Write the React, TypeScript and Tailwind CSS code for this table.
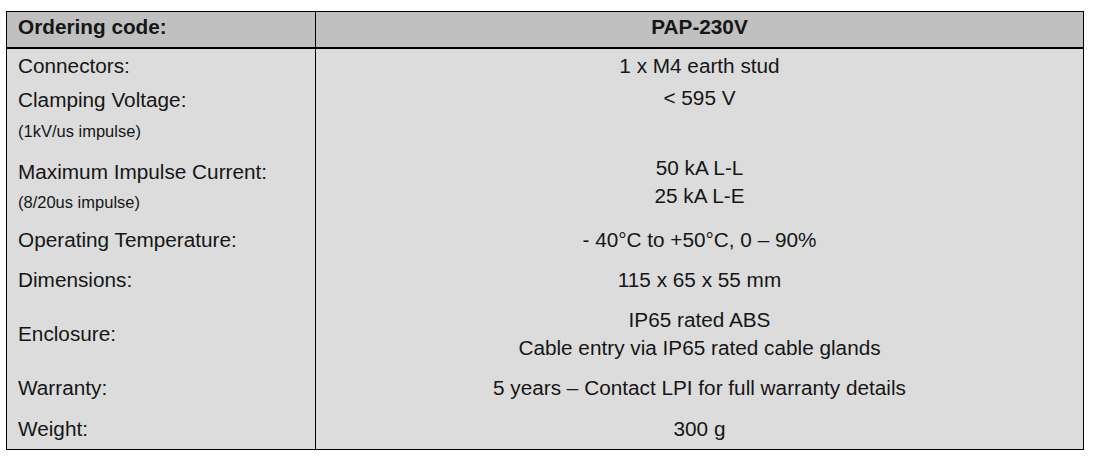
export default function App() {
  return (
    <main className="min-h-screen bg-white pt-[11px] pl-[6px] text-[#161616] font-['Liberation_Sans',Arial,sans-serif]">
      <div className="w-[1078px] border border-black bg-[#dcdcdc]">
        {/* Header */}
        <div className="grid grid-cols-[309px_1fr] h-[37px] bg-[#c0c0c0] border-b-2 border-black">
          <div className="border-r border-black pl-[11px] pt-[1px] text-[20.75px] leading-[28px] font-bold">
            Ordering code:
          </div>
          <div className="text-center pt-[1px] text-[20.75px] leading-[28px] font-bold">PAP-230V</div>
        </div>

        {/* Connectors */}
        <Row h="h-[33px]">
          <Cell left>Connectors:</Cell>
          <Cell>1 x M4 earth stud</Cell>
        </Row>

        {/* Clamping */}
        <Row h="h-[68px]">
          <div className="border-r border-black pl-[11px] pt-[4px]">
            <p className="text-[20.75px] leading-[28px]">Clamping Voltage:</p>
            <p className="mt-[6px] text-[16.5px] leading-[22px]">(1kV/us impulse)</p>
          </div>
          <div className="text-center pt-[2px] text-[20.75px] leading-[28px]">&lt; 595 V</div>
        </Row>

        {/* Impulse current */}
        <Row h="h-[70px]">
          <div className="border-r border-black pl-[11px] pt-[8px]">
            <p className="text-[20.75px] leading-[28px]">Maximum Impulse Current:</p>
            <p className="mt-[5px] text-[16.5px] leading-[22px]">(8/20us impulse)</p>
          </div>
          <div className="text-center pt-[4px] text-[20.75px] leading-[28px]">
            <p>50 kA L-L</p>
            <p>25 kA L-E</p>
          </div>
        </Row>

        <Row h="h-[40px]">
          <Cell left>Operating Temperature:</Cell>
          <Cell>- 40°C to +50°C, 0 – 90%</Cell>
        </Row>

        <Row h="h-[40px]">
          <Cell left>Dimensions:</Cell>
          <Cell>115 x 65 x 55 mm</Cell>
        </Row>

        <Row h="h-[68px]">
          <Cell left>Enclosure:</Cell>
          <div className="text-center pt-[6px] text-[20.75px] leading-[28px]">
            <p>IP65 rated ABS</p>
            <p>Cable entry via IP65 rated cable glands</p>
          </div>
        </Row>

        <Row h="h-[40px]">
          <Cell left>Warranty:</Cell>
          <Cell>5 years – Contact LPI for full warranty details</Cell>
        </Row>

        <Row h="h-[41px]">
          <Cell left>Weight:</Cell>
          <Cell>300 g</Cell>
        </Row>
      </div>
    </main>
  );
}

function Row({ h, children }: { h: string; children: React.ReactNode }) {
  return <div className={["grid grid-cols-[309px_1fr]", h].join(" ")}>{children}</div>;
}

function Cell({ left, children }: { left?: boolean; children: React.ReactNode }) {
  return (
    <div
      className={[
        "flex items-center text-[20.75px] leading-[28px]",
        left ? "border-r border-black pl-[11px]" : "justify-center text-center",
      ].join(" ")}
    >
      {children}
    </div>
  );
}
